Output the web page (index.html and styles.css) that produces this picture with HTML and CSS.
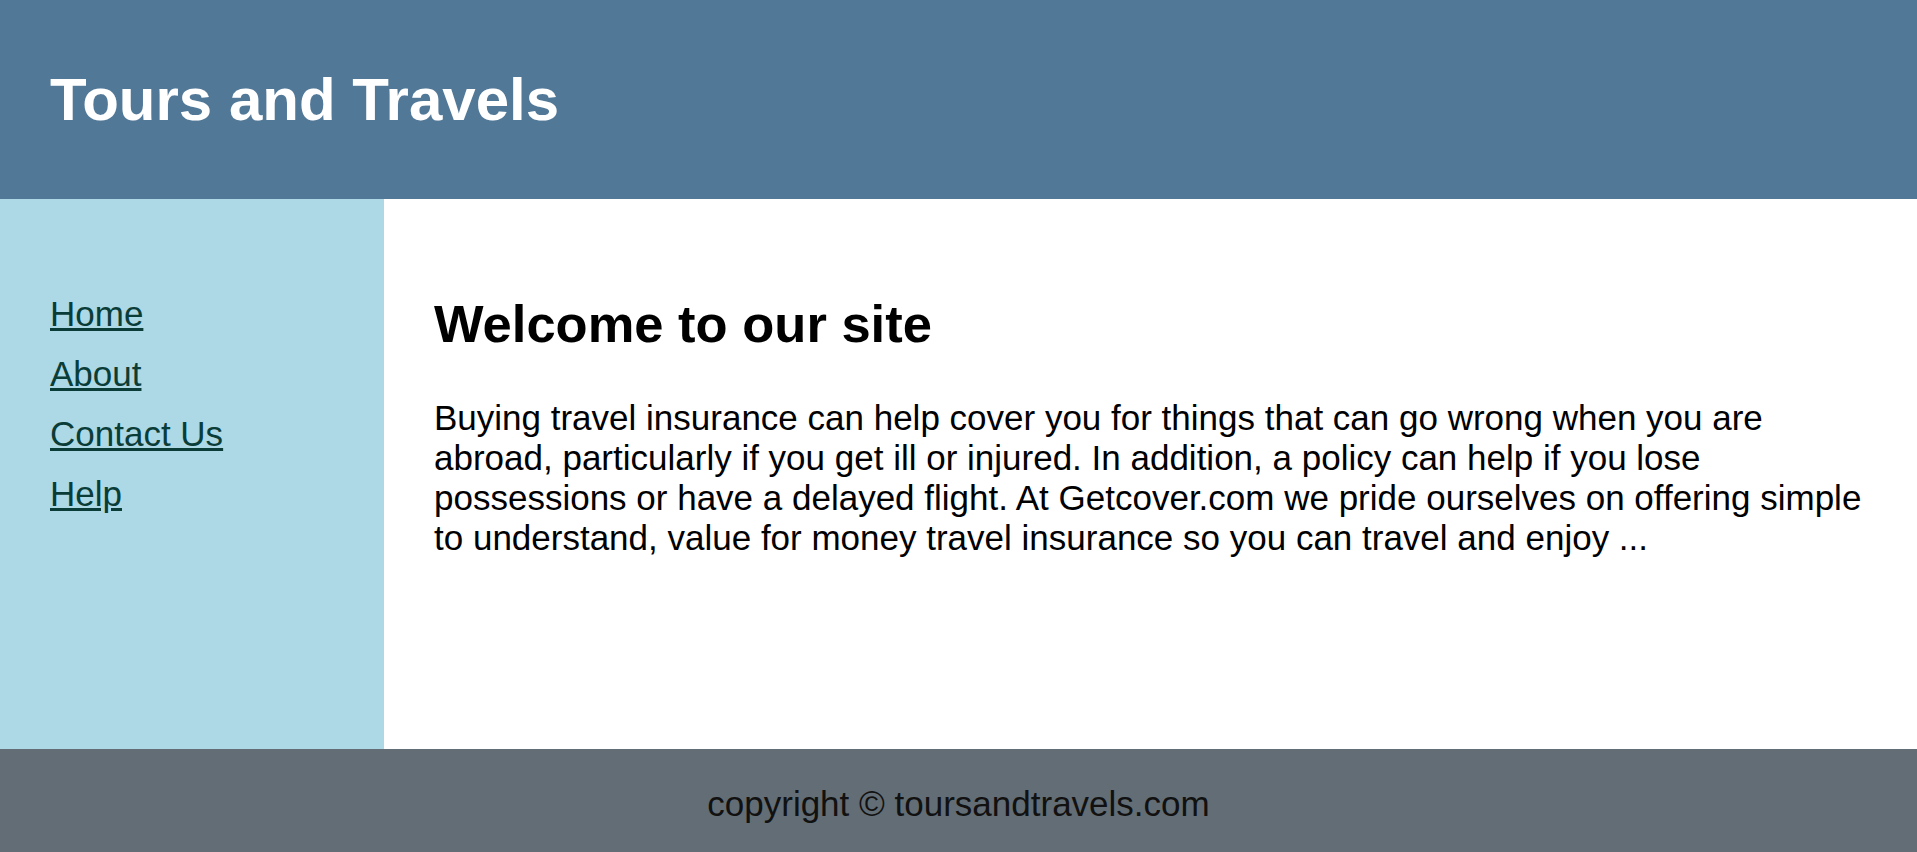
FILE: index.html
```html
<!DOCTYPE html>
<html lang="en">
<head>
<meta charset="utf-8">
<title>Tours and Travels</title>
<link rel="stylesheet" href="styles.css">
</head>
<body>
<header class="site-header">
  <h1 class="site-title">Tours and Travels</h1>
</header>
<div class="main">
  <nav class="sidebar">
    <a class="nav-link" href="#">Home</a>
    <a class="nav-link" href="#">About</a>
    <a class="nav-link" href="#">Contact Us</a>
    <a class="nav-link" href="#">Help</a>
  </nav>
  <main class="content">
    <h2 class="content-title">Welcome to our site</h2>
    <p class="content-text">Buying travel insurance can help cover you for things that can go wrong when you are abroad, particularly if you get ill or injured. In addition, a policy can help if you lose possessions or have a delayed flight. At Getcover.com we pride ourselves on offering simple to understand, value for money travel insurance so you can travel and enjoy ...</p>
  </main>
</div>
<footer class="site-footer">copyright © toursandtravels.com</footer>
</body>
</html>
```
FILE: styles.css
```css
* { box-sizing: border-box; }
html, body {
  margin: 0;
  padding: 0;
}
body {
  font-family: "Liberation Sans", Arial, sans-serif;
  font-size: 35px;
  color: #000;
  background: #fff;
}
.site-header {
  background: #527898;
  padding: 65px 50px;
  height: 199px;
}
.site-title {
  margin: 0;
  color: #fff;
  font-size: 60px;
  font-weight: bold;
  line-height: normal;
}
.main {
  display: grid;
  grid-template-columns: 384px 1fr;
  height: 550px;
}
.sidebar {
  background: #add8e6;
  padding: 95px 50px 0;
  display: flex;
  flex-direction: column;
  align-items: flex-start;
  gap: 20px;
}
.nav-link {
  color: #0a3d38;
  text-decoration: underline;
  line-height: normal;
}
.content {
  padding: 94px 50px 0;
}
.content-title {
  margin: 0 0 43.5px;
  font-size: 52.5px;
  font-weight: bold;
  line-height: normal;
}
.content-text {
  margin: 0;
  line-height: normal;
}
.site-footer {
  background: #636d75;
  color: #111;
  text-align: center;
  padding: 35px 20px 28px;
  height: 103px;
  line-height: normal;
}
```
